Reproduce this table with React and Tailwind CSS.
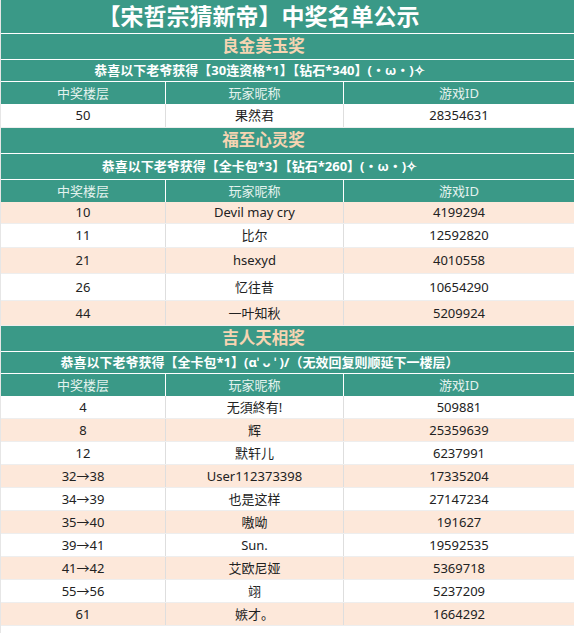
import React from 'react';

const sections = [
  {
    name: '良金美玉奖',
    nameH: 'h-[26px]',
    note: '恭喜以下老爷获得【30连资格*1】【钻石*340】(・ω・)✧',
    noteH: 'h-[22px]',
    rows: [{ floor: '50', nick: '果然君', id: '28354631', h: 'h-[24px]' }],
    startPeach: false,
  },
  {
    name: '福至心灵奖',
    nameH: 'h-[26px]',
    note: '恭喜以下老爷获得【全卡包*3】【钻石*260】(・ω・)✧',
    noteH: 'h-[26px]',
    rows: [
      { floor: '10', nick: 'Devil may cry', id: '4199294', h: 'h-[22px]' },
      { floor: '11', nick: '比尔', id: '12592820', h: 'h-[24px]' },
      { floor: '21', nick: 'hsexyd', id: '4010558', h: 'h-[26px]' },
      { floor: '26', nick: '忆往昔', id: '10654290', h: 'h-[27px]' },
      { floor: '44', nick: '一叶知秋', id: '5209924', h: 'h-[25px]' },
    ],
    startPeach: true,
  },
  {
    name: '吉人天相奖',
    nameH: 'h-[26px]',
    note: '恭喜以下老爷获得【全卡包*1】(ɑˈ ᴗ ˈ )/（无效回复则顺延下一楼层）',
    noteH: 'h-[22px]',
    rows: [
      { floor: '4', nick: '无須終有!', id: '509881', h: 'h-[23px]' },
      { floor: '8', nick: '辉', id: '25359639', h: 'h-[23px]' },
      { floor: '12', nick: '默轩儿', id: '6237991', h: 'h-[23px]' },
      { floor: '32→38', nick: 'User112373398', id: '17335204', h: 'h-[23px]' },
      { floor: '34→39', nick: '也是这样', id: '27147234', h: 'h-[23px]' },
      { floor: '35→40', nick: '嗷呦', id: '191627', h: 'h-[23px]' },
      { floor: '39→41', nick: 'Sun.', id: '19592535', h: 'h-[23px]' },
      { floor: '41→42', nick: '艾欧尼娅', id: '5369718', h: 'h-[23px]' },
      { floor: '55→56', nick: '翊', id: '5237209', h: 'h-[23px]' },
      { floor: '61', nick: '嫉才。', id: '1664292', h: 'h-[23px]' },
    ],
    startPeach: false,
  },
];

const Section = ({ s }) => (
  <div>
    <div className={`${s.nameH} flex items-center justify-center pr-[48px] bg-[#3a9987] border-b border-white text-[16.5px] font-bold text-[#f6d4b2]`}>
      {s.name}
    </div>
    <div className={`${s.noteH} flex items-center justify-center pr-[56px] bg-[#3a9987] border-b border-white text-[13px] font-bold text-white whitespace-nowrap`}>
      {s.note}
    </div>
    <div className="grid grid-cols-[165px_178px_1fr] h-[22px] bg-[#3a9987] text-[13px] text-[#e4f2ee]">
      <div className="flex items-center justify-center border-r border-white">中奖楼层</div>
      <div className="flex items-center justify-center border-r border-white">玩家昵称</div>
      <div className="flex items-center justify-center">游戏ID</div>
    </div>
    {s.rows.map((r, i) => {
      const peach = s.startPeach ? i % 2 === 0 : i % 2 === 1;
      return (
        <div
          key={r.floor}
          className={`grid grid-cols-[165px_178px_1fr] ${r.h} text-[13px] text-[#222] border-b border-[#eeeeee] ${peach ? 'bg-[#fde8da]' : 'bg-white'}`}
        >
          <div className="flex items-center justify-center border-r border-[#dedede]">{r.floor}</div>
          <div className="flex items-center justify-center border-r border-[#dedede]">{r.nick}</div>
          <div className="flex items-center justify-center">{r.id}</div>
        </div>
      );
    })}
  </div>
);

export default function App() {
  return (
    <div className="w-[575px] h-[633px] bg-white pr-px border-l border-[#e6e6e6] font-['Noto_Sans','Noto_Sans_CJK_SC',sans-serif] leading-none">
      <div className="h-[34px] flex items-center justify-center pr-[58px] bg-[#3a9987] border-b border-white text-[23px] font-bold text-white">
        【宋哲宗猜新帝】中奖名单公示
      </div>
      {sections.map((s) => (
        <Section key={s.name} s={s} />
      ))}
    </div>
  );
}
